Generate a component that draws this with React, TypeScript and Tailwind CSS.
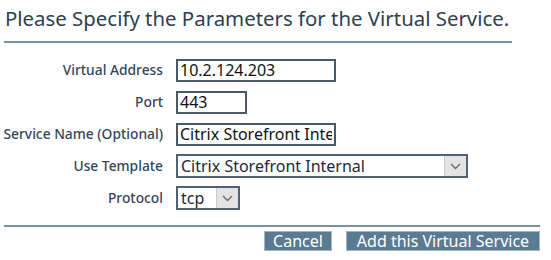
import React from 'react';

const labelCls = 'text-right text-[13.8px] font-medium text-[#34465a] pr-[13px] leading-none';
const inputCls =
  'h-[23px] border-2 border-[#465a6c] bg-white px-[2px] text-[16px] text-[#111] leading-none outline-none font-["Noto_Sans",sans-serif]';

const Chevron = () => (
  <svg width="11" height="7" viewBox="0 0 11 7" fill="none">
    <path d="M1 1l4.5 4.5L10 1" stroke="#6b6b6b" strokeWidth="1.4" />
  </svg>
);

const FakeSelect: React.FC<{ value: string; width: string }> = ({ value, width }) => (
  <div className={`flex h-[24px] border-2 border-[#4f6375] bg-white ${width}`}>
    <div className="flex flex-1 items-center px-[3px] text-[16px] text-[#1a2a3a] leading-none overflow-hidden whitespace-nowrap">
      {value}
    </div>
    <div className="flex w-[22px] items-center justify-center border-l border-[#c9c9c9] bg-[#e3e3e3]">
      <Chevron />
    </div>
  </div>
);

export default function App() {
  return (
    <div className="w-[551px] h-[260px] bg-white font-['Noto_Sans',sans-serif] overflow-hidden">
      <div className="pl-[5px] pt-[5px] text-[20.4px] leading-[26px] text-[#2e3f50]">
        Please Specify the Parameters for the Virtual Service.
      </div>
      <div className="ml-[4px] mt-[10px] h-[2px] w-[508px] bg-[#7a90a3]" />

      <div className="mt-[15px] grid grid-cols-[176px_auto] items-center gap-y-[8px]">
        <div className={labelCls}>Virtual Address</div>
        <div>
          <input className={`${inputCls} w-[160px]`} defaultValue="10.2.124.203" />
        </div>

        <div className={labelCls}>Port</div>
        <div>
          <input className={`${inputCls} w-[71px]`} defaultValue="443" />
        </div>

        <div className={labelCls}>Service Name (Optional)</div>
        <div>
          <input className={`${inputCls} w-[160px]`} defaultValue="Citrix Storefront Internal" />
        </div>

        <div className={labelCls}>Use Template</div>
        <div>
          <FakeSelect value="Citrix Storefront Internal" width="w-[292px]" />
        </div>

        <div className={labelCls}>Protocol</div>
        <div>
          <FakeSelect value="tcp" width="w-[64px]" />
        </div>
      </div>

      <div className="ml-[4px] mt-[15px] h-[2px] w-[536px] bg-[#7a90a3]" />

      <div className="mt-[5px] flex justify-end gap-[16px] pr-[12px]">
        <button className="h-[18px] w-[66px] bg-[#5b7b93] text-[16px] leading-none text-white outline outline-1 outline-[#9fb3c3]">
          Cancel
        </button>
        <button className="h-[18px] w-[192px] bg-[#5b7b93] text-[16px] leading-none text-white outline outline-1 outline-[#9fb3c3]">
          Add this Virtual Service
        </button>
      </div>
    </div>
  );
}
